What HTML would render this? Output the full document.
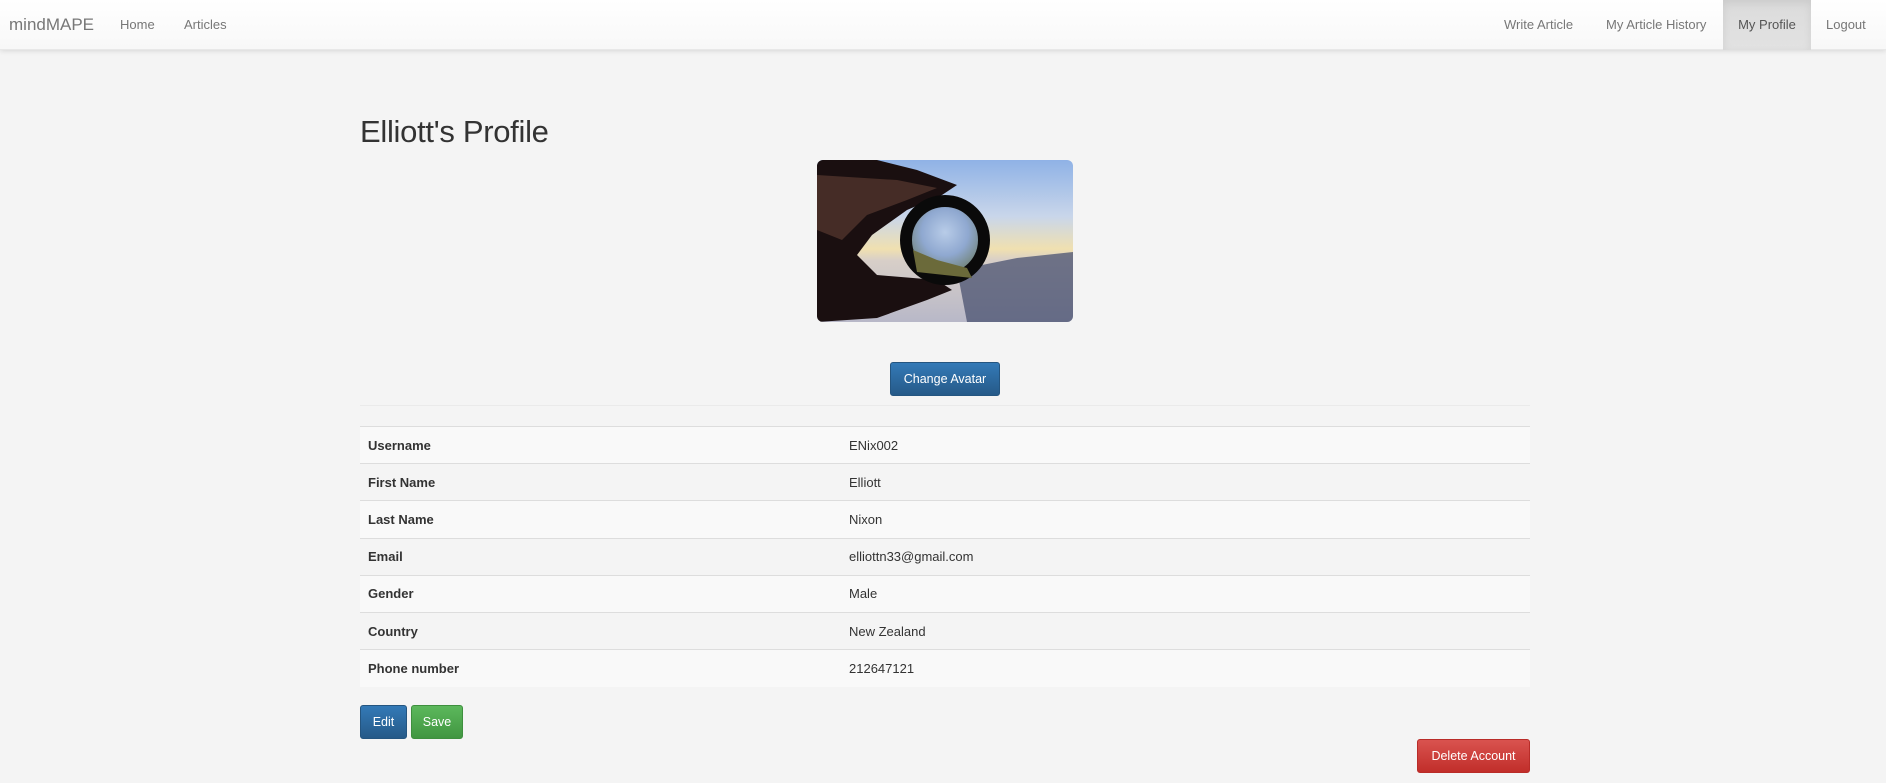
<!DOCTYPE html>
<html><head><meta charset="utf-8"><style>
*{margin:0;padding:0;box-sizing:border-box}
body{width:1886px;height:783px;background:#f4f4f4;font-family:"Liberation Sans",sans-serif;color:#333;position:relative;overflow:hidden}
.nav{position:absolute;left:0;top:0;width:1886px;height:50px;background:linear-gradient(#fff,#f8f8f8);box-shadow:0 1px 5px rgba(0,0,0,.12);border-bottom:1px solid #e8e8e8}
.nav a{position:absolute;top:0;line-height:50px;font-size:13px;color:#777;text-decoration:none}
.brand{font-size:17px!important}
.active{background:linear-gradient(#dbdbdb,#e2e2e2);box-shadow:inset 0 3px 9px rgba(0,0,0,.08);color:#555!important;text-align:center}
h1{position:absolute;left:360px;top:114px;font-size:31px;font-weight:normal;letter-spacing:-0.3px;color:#333}
.img{position:absolute;left:817px;top:160px;width:256px;height:162px;border-radius:6px;overflow:hidden}
.btn{position:absolute;color:#fff;font-size:12.5px;text-align:center;border-radius:3px}
.blue{background:linear-gradient(#337ab7,#265a88);border:1px solid #245580}
.green{background:linear-gradient(#5cb85c,#419641);border:1px solid #3e8f3e}
.red{background:linear-gradient(#d9534f,#c12e2a);border:1px solid #b92c28}
.hr{position:absolute;left:360px;top:405px;width:1170px;height:1px;background:#eaeaea}
table{position:absolute;left:360px;top:426px;width:1170px;border-collapse:collapse;font-size:13px}
td{height:37.2px;border-top:1px solid #ddd;padding:0 8px;vertical-align:middle}
tr:nth-child(odd){background:#f9f9f9}
td:first-child{font-weight:bold;width:481px}
</style></head><body>
<div class="nav">
<a class="brand" style="left:9px">mindMAPE</a>
<a style="left:120px">Home</a>
<a style="left:184px">Articles</a>
<a style="left:1504px">Write Article</a>
<a style="left:1606px">My Article History</a>
<a class="active" style="left:1723px;width:88px">My Profile</a>
<a style="left:1826px">Logout</a>
</div>
<h1>Elliott's Profile</h1>
<div class="img"><svg width="256" height="162" viewBox="0 0 256 162">
<defs>
<linearGradient id="sky" x1="0" y1="0" x2="0" y2="1"><stop offset="0" stop-color="#8fb2e6"/><stop offset=".35" stop-color="#c9d6ea"/><stop offset=".55" stop-color="#f0e0b0"/><stop offset=".62" stop-color="#d8cfc8"/><stop offset="1" stop-color="#b8b8c8"/></linearGradient>
<radialGradient id="lens" cx=".5" cy=".4" r=".6"><stop offset="0" stop-color="#b8cce8"/><stop offset=".5" stop-color="#8fa8d0"/><stop offset="1" stop-color="#6a7a60"/></radialGradient>
</defs>
<rect width="256" height="162" fill="url(#sky)"/>
<path d="M140 110 L200 98 L256 92 L256 162 L150 162 Z" fill="#4a5270" opacity=".75"/>
<path d="M0 0 L60 0 L100 10 L140 25 L125 35 L90 50 L55 75 L40 95 L60 115 L120 120 L135 130 L110 140 L60 158 L0 162 Z" fill="#1a0f10"/>
<path d="M0 15 L80 20 L120 28 L90 40 L50 55 L25 80 L0 70 Z" fill="#6a4638" opacity=".55"/>
<circle cx="128" cy="80" r="39" fill="url(#lens)" stroke="#0a0a0a" stroke-width="12"/>
<path d="M96 90 L120 100 L150 108 L155 118 L100 112 Z" fill="#6b6a3a"/>
</svg></div>
<div class="btn blue" style="left:890px;top:362px;width:110px;height:34px;line-height:32px">Change Avatar</div>
<div class="hr"></div>
<table>
<tr><td>Username</td><td>ENix002</td></tr>
<tr><td>First Name</td><td>Elliott</td></tr>
<tr><td>Last Name</td><td>Nixon</td></tr>
<tr><td>Email</td><td>elliottn33@gmail.com</td></tr>
<tr><td>Gender</td><td>Male</td></tr>
<tr><td>Country</td><td>New Zealand</td></tr>
<tr><td>Phone number</td><td>212647121</td></tr>
</table>
<div class="btn blue" style="left:360px;top:705px;width:47px;height:34px;line-height:32px">Edit</div>
<div class="btn green" style="left:411px;top:705px;width:52px;height:34px;line-height:32px">Save</div>
<div class="btn red" style="left:1417px;top:739px;width:113px;height:34px;line-height:32px">Delete Account</div>
</body></html>
